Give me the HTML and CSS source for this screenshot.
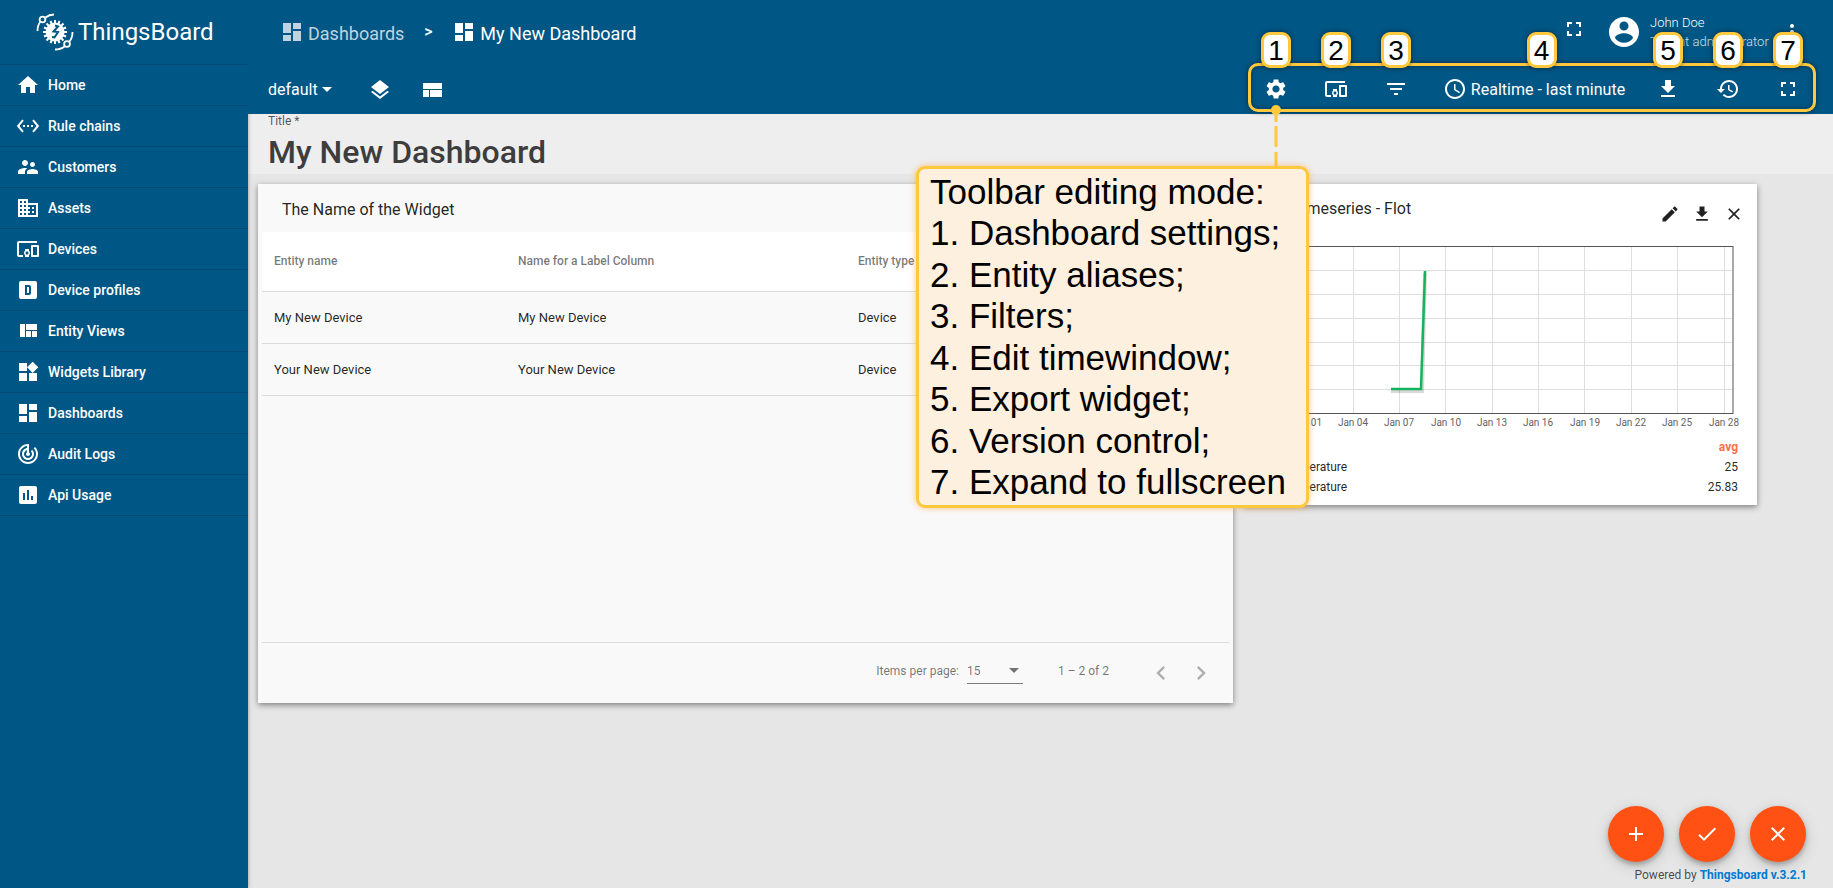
FILE: index.html
```html
<!DOCTYPE html>
<html lang="en">
<head>
<meta charset="utf-8">
<title>ThingsBoard | My New Dashboard</title>
<link rel="stylesheet" href="styles.css">
</head>
<body>
<svg class="sprite" aria-hidden="true">
  <symbol id="i-dashboard" viewBox="0 0 24 24"><path d="M3 13h8V3H3v10zm0 8h8v-6H3v6zm10 0h8V11h-8v10zm0-18v6h8V3h-8z"/></symbol>
  <symbol id="i-devices" viewBox="0 0 24 24"><path d="M3 6h18V4H3c-1.100 0-2 .9-2 2v12c0 1.100.9 2 2 2h4v-2H3V6zm10 6H9v1.780c-.61.55-1 1.330-1 2.220s.39 1.670 1 2.220V20h4v-1.780c.61-.55 1-1.340 1-2.220s-.39-1.670-1-2.220V12zm-2 5.500c-.83 0-1.500-.67-1.500-1.500s.67-1.500 1.500-1.500 1.500.67 1.500 1.500-.67 1.500-1.500 1.500zM22 8h-6c-.5 0-1 .5-1 1v10c0 .5.5 1 1 1h6c.5 0 1-.5 1-1V9c0-.5-.5-1-1-1zm-1 10h-4v-8h4v8z"/></symbol>
  <symbol id="i-fullscreen" viewBox="0 0 24 24"><path d="M7 14H5v5h5v-2H7v-3zm-2-4h2V7h3V5H5v5zm12 7h-3v2h5v-5h-2v3zM14 5v2h3v3h2V5h-5z"/></symbol>
  <symbol id="i-download" viewBox="0 0 24 24"><path d="M19 9h-4V3H9v6H5l7 7 7-7zM5 18v2h14v-2H5z"/></symbol>
  <symbol id="i-close" viewBox="0 0 24 24"><path d="M19 6.410L17.590 5 12 10.590 6.410 5 5 6.410 10.590 12 5 17.590 6.410 19 12 13.410 17.590 19 19 17.590 13.410 12z"/></symbol>
</svg>

<div class="app">
  <aside class="sidebar">
    <div class="brand">
      <svg class="brand-mark" viewBox="0 0 38 38" aria-hidden="true">
        <g fill="none" stroke="#fff" stroke-width="1.800">
          <path d="M1.500 18C1.500 14 2.500 11 4.500 8.500M9.500 4.500C12 2.500 15 1.500 18 1.500"/>
          <circle cx="6.500" cy="6.500" r="2.900"/>
          <path d="M36.500 19C36.500 23 35.500 26 33.500 28.500M28.500 33.500C26 35.500 22.500 36.500 19 36.500"/>
          <circle cx="31" cy="31" r="2.900"/>
          <g stroke-width="2">
            <path d="M19 7v24M7 19h24M10.500 10.500l17 17M10.500 27.500l17-17M14.500 8l9 22M8 23.500l22-9M23.500 8l-9 22M8 14.500l22 9"/>
          </g>
        </g>
        <circle cx="19" cy="19" r="9.500" fill="#fff"/>
        <path d="M19 12.500l3 1-4.500 5 4.500.5-3.500 5.500-2.500-.5" fill="none" stroke="#005684" stroke-width="2"/>
      </svg>
      <span class="brand-name">ThingsBoard</span>
    </div>
    <nav class="menu">
      <a href="#"><svg class="icon" viewBox="0 0 24 24"><path d="M10 20v-6h4v6h5v-8h3L12 3 2 12h3v8z"/></svg>Home</a>
      <a href="#"><svg class="icon" viewBox="0 0 24 24"><path d="M7.770 6.760L6.230 5.480.82 12l5.410 6.520 1.540-1.280L3.420 12l4.350-5.240zM7 13h2v-2H7v2zm10-2h-2v2h2v-2zm-6 2h2v-2h-2v2zm6.770-7.520l-1.540 1.280L20.580 12l-4.350 5.240 1.540 1.280L23.180 12l-5.410-6.520z"/></svg>Rule chains</a>
      <a href="#"><svg class="icon" viewBox="0 0 24 24"><path d="M16.500 12c1.380 0 2.490-1.120 2.490-2.500S17.880 7 16.500 7C15.120 7 14 8.120 14 9.500s1.120 2.500 2.500 2.500zM9 11c1.660 0 2.990-1.340 2.990-3S10.660 5 9 5C7.340 5 6 6.340 6 8s1.340 3 3 3zm7.500 3c-1.830 0-5.500.92-5.500 2.750V19h11v-2.250c0-1.830-3.670-2.750-5.500-2.750zM9 13c-2.330 0-7 1.170-7 3.500V19h7v-2.250c0-.85.33-2.340 2.370-3.470C10.500 13.100 9.660 13 9 13z"/></svg>Customers</a>
      <a href="#"><svg class="icon" viewBox="0 0 24 24"><path d="M12 7V3H2v18h20V7H12zM6 19H4v-2h2v2zm0-4H4v-2h2v2zm0-4H4V9h2v2zm0-4H4V5h2v2zm4 12H8v-2h2v2zm0-4H8v-2h2v2zm0-4H8V9h2v2zm0-4H8V5h2v2zm10 12h-8v-2h2v-2h-2v-2h2v-2h-2V9h8v10zm-2-8h-2v2h2v-2zm0 4h-2v2h2v-2z"/></svg>Assets</a>
      <a href="#"><svg class="icon"><use href="#i-devices"/></svg>Devices</a>
      <a href="#"><svg class="icon" viewBox="0 0 24 24"><path d="M9 7v10h4a2 2 0 0 0 2-2V9a2 2 0 0 0-2-2H9m2 2h2v6h-2V9M5 3h14a2 2 0 0 1 2 2v14a2 2 0 0 1-2 2H5a2 2 0 0 1-2-2V5a2 2 0 0 1 2-2z" fill-rule="evenodd"/></svg>Device profiles</a>
      <a href="#"><svg class="icon" viewBox="0 0 24 24"><path d="M10 18h5v-6h-5v6zm-6 0h5V5H4v13zm12 0h5v-6h-5v6zM10 5v6h11V5H10z"/></svg>Entity Views</a>
      <a href="#"><svg class="icon" viewBox="0 0 24 24"><path d="M13 13v8h8v-8h-8zM3 21h8v-8H3v8zM3 3v8h8V3H3zm13.660-1.310L11 7.340 16.660 13l5.660-5.660-5.660-5.650z"/></svg>Widgets Library</a>
      <a href="#"><svg class="icon"><use href="#i-dashboard"/></svg>Dashboards</a>
      <a href="#"><svg class="icon" viewBox="0 0 24 24"><path d="M19.070 4.930l-1.410 1.410C19.100 7.790 20 9.790 20 12c0 4.420-3.580 8-8 8s-8-3.580-8-8c0-4.080 3.050-7.440 7-7.930v2.020C8.160 6.570 6 9.030 6 12c0 3.310 2.690 6 6 6s6-2.690 6-6c0-1.660-.67-3.160-1.760-4.240l-1.410 1.410C15.550 9.900 16 10.900 16 12c0 2.210-1.790 4-4 4s-4-1.790-4-4c0-1.860 1.280-3.410 3-3.860v2.140c-.6.35-1 .98-1 1.720 0 1.100.9 2 2 2s2-.9 2-2c0-.74-.4-1.380-1-1.720V2h-1C6.480 2 2 6.480 2 12s4.480 10 10 10 10-4.480 10-10c0-2.760-1.120-5.260-2.930-7.070z"/></svg>Audit Logs</a>
      <a href="#"><svg class="icon" viewBox="0 0 24 24"><path d="M19 3H5c-1.100 0-2 .9-2 2v14c0 1.100.9 2 2 2h14c1.100 0 2-.9 2-2V5c0-1.100-.9-2-2-2zM9 17H7v-7h2v7zm4 0h-2V7h2v10zm4 0h-2v-4h2v4z"/></svg>Api Usage</a>
    </nav>
  </aside>

  <div class="main">
    <header class="header">
      <div class="topbar">
        <nav class="crumbs" aria-label="Breadcrumb">
          <a class="crumb crumb-parent" href="#"><svg class="icon"><use href="#i-dashboard"/></svg><span>Dashboards</span></a>
          <span class="crumb-sep">&gt;</span>
          <a class="crumb" href="#"><svg class="icon"><use href="#i-dashboard"/></svg><span>My New Dashboard</span></a>
        </nav>
        <div class="account">
          <button class="icon-btn account-full" aria-label="Fullscreen"><svg class="icon"><use href="#i-fullscreen"/></svg></button>
          <svg class="avatar" viewBox="0 0 24 24" aria-hidden="true"><path d="M12 2C6.480 2 2 6.480 2 12s4.480 10 10 10 10-4.480 10-10S17.520 2 12 2zm0 3c1.660 0 3 1.340 3 3s-1.340 3-3 3-3-1.340-3-3 1.340-3 3-3zm0 14.200c-2.500 0-4.710-1.280-6-3.220.03-1.990 4-3.080 6-3.080 1.990 0 5.970 1.090 6 3.080-1.290 1.940-3.500 3.220-6 3.220z"/></svg>
          <div class="who"><span>John Doe</span><span class="role">Tenant administrator</span></div>
          <button class="icon-btn" aria-label="User menu"><svg class="icon" viewBox="0 0 24 24"><path d="M12 8c1.100 0 2-.9 2-2s-.9-2-2-2-2 .9-2 2 .9 2 2 2zm0 2c-1.100 0-2 .9-2 2s.9 2 2 2 2-.9 2-2-.9-2-2-2zm0 6c-1.100 0-2 .9-2 2s.9 2 2 2 2-.9 2-2-.9-2-2-2z"/></svg></button>
        </div>
      </div>

      <div class="toolbar">
        <div class="states">
          <button class="state-btn">default<svg class="caret" viewBox="0 0 10 5" aria-hidden="true"><path d="M0 0h10L5 5z"/></svg></button>
          <button class="icon-btn" aria-label="Manage states"><svg class="icon" viewBox="0 0 24 24"><path d="M11.990 18.540l-7.370-5.730L3 14.070l9 7 9-7-1.630-1.270-7.380 5.740zM12 16l7.360-5.730L21 9l-9-7-9 7 1.630 1.270L12 16z"/></svg></button>
          <button class="icon-btn" aria-label="Manage layouts"><svg class="icon" viewBox="0 0 24 24"><path d="M3 19h6v-7H3v7zm7 0h12v-7H10v7zM3 5v6h19V5H3z"/></svg></button>
        </div>
        <div class="tools">
          <button class="icon-btn" aria-label="Dashboard settings"><svg class="icon" viewBox="0 0 24 24"><path d="M19.140 12.940c.04-.3.06-.61.06-.94 0-.32-.02-.64-.07-.94l2.030-1.580c.18-.14.23-.41.12-.61l-1.920-3.320c-.12-.22-.37-.29-.59-.22l-2.390.96c-.5-.38-1.030-.7-1.620-.94l-.36-2.540c-.04-.24-.24-.41-.48-.41h-3.840c-.24 0-.43.17-.47.41l-.36 2.540c-.59.24-1.130.57-1.620.94l-2.390-.96c-.22-.08-.47 0-.59.22L2.740 8.870c-.12.21-.08.47.12.61l2.030 1.580c-.05.3-.09.63-.09.94s.02.64.07.94l-2.030 1.580c-.18.14-.23.41-.12.61l1.920 3.320c.12.22.37.29.59.22l2.390-.96c.5.38 1.030.7 1.620.94l.36 2.540c.05.24.24.41.48.41h3.840c.24 0 .44-.17.47-.41l.36-2.540c.59-.24 1.130-.56 1.620-.94l2.390.96c.22.08.47 0 .59-.22l1.920-3.320c.12-.22.07-.47-.12-.61l-2.010-1.580zM12 15.600c-1.980 0-3.600-1.620-3.600-3.600s1.620-3.600 3.600-3.600 3.600 1.620 3.600 3.600-1.620 3.600-3.600 3.600z"/></svg><span class="badge">1</span></button>
          <button class="icon-btn" aria-label="Entity aliases"><svg class="icon"><use href="#i-devices"/></svg><span class="badge">2</span></button>
          <button class="icon-btn" aria-label="Filters"><svg class="icon" viewBox="0 0 24 24"><path d="M10 18h4v-2h-4v2zM3 6v2h18V6H3zm3 7h12v-2H6v2z"/></svg><span class="badge">3</span></button>
          <button class="time-btn"><svg class="icon" viewBox="0 0 24 24" aria-hidden="true"><path d="M11.990 2C6.470 2 2 6.480 2 12s4.470 10 9.990 10C17.520 22 22 17.520 22 12S17.520 2 11.990 2zM12 20c-4.420 0-8-3.580-8-8s3.580-8 8-8 8 3.580 8 8-3.580 8-8 8zm.5-13H11v6l5.250 3.150.75-1.230-4.500-2.670z"/></svg>Realtime - last minute<span class="badge">4</span></button>
          <button class="icon-btn" aria-label="Export widget"><svg class="icon"><use href="#i-download"/></svg><span class="badge">5</span></button>
          <button class="icon-btn" aria-label="Version control"><svg class="icon" viewBox="0 0 24 24"><path d="M13 3c-4.970 0-9 4.030-9 9H1l3.890 3.890.07.14L9 12H6c0-3.870 3.130-7 7-7s7 3.130 7 7-3.130 7-7 7c-1.930 0-3.680-.79-4.940-2.060l-1.420 1.420C8.270 19.990 10.510 21 13 21c4.970 0 9-4.030 9-9s-4.030-9-9-9zm-1 5v5l4.280 2.540.72-1.210-3.500-2.080V8H12z"/></svg><span class="badge">6</span></button>
          <button class="icon-btn" aria-label="Expand to fullscreen"><svg class="icon"><use href="#i-fullscreen"/></svg><span class="badge">7</span></button>

          <svg class="connector" viewBox="0 0 12 62" aria-hidden="true"><circle cx="6" cy="6" r="5"/><path d="M4.500 8h3v10h-3zM4.500 22h3v21h-3zM4.500 48h3v14h-3z"/></svg>
          <div class="callout">
            <span>Toolbar editing mode:</span>
            <span>1. Dashboard settings;</span>
            <span>2. Entity aliases;</span>
            <span>3. Filters;</span>
            <span>4. Edit timewindow;</span>
            <span>5. Export widget;</span>
            <span>6. Version control;</span>
            <span>7. Expand to fullscreen</span>
          </div>
        </div>
      </div>
    </header>

    <section class="title-strip">
      <label for="dash-title">Title *</label>
      <input id="dash-title" type="text" value="My New Dashboard">
    </section>

    <main class="board">
      <section class="widget widget-table">
        <h2 class="widget-title">The Name of the Widget</h2>
        <table class="entities">
          <thead><tr><th class="col-name">Entity name</th><th class="col-label">Name for a Label Column</th><th>Entity type</th></tr></thead>
          <tbody>
            <tr><td>My New Device</td><td>My New Device</td><td>Device</td></tr>
            <tr><td>Your New Device</td><td>Your New Device</td><td>Device</td></tr>
          </tbody>
        </table>
        <div class="pager">
          <label for="page-size">Items per page:</label>
          <span class="select-wrap">
            <select id="page-size"><option>15</option><option>30</option></select>
            <svg class="caret" viewBox="0 0 10 5" aria-hidden="true"><path d="M0 0h10L5 5z"/></svg>
          </span>
          <span class="range">1 – 2 of 2</span>
          <button class="icon-btn" aria-label="Previous page"><svg viewBox="0 0 24 24"><path d="M15.410 7.410L14 6l-6 6 6 6 1.410-1.410L10.830 12z"/></svg></button>
          <button class="icon-btn" aria-label="Next page"><svg viewBox="0 0 24 24"><path d="M10 6L8.590 7.410 13.170 12l-4.580 4.590L10 18l6-6z"/></svg></button>
        </div>
      </section>

      <section class="widget widget-chart">
        <div class="chart-head">
          <h2>Timeseries - Flot</h2>
          <div class="chart-actions">
            <button aria-label="Edit"><svg viewBox="0 0 24 24"><path d="M3 17.250V21h3.750L17.810 9.940l-3.750-3.750L3 17.250zM20.710 7.040c.39-.39.39-1.020 0-1.410l-2.340-2.340c-.39-.39-1.020-.39-1.410 0l-1.830 1.830 3.750 3.750 1.830-1.830z"/></svg></button>
            <button aria-label="Export"><svg><use href="#i-download"/></svg></button>
            <button aria-label="Remove"><svg><use href="#i-close"/></svg></button>
          </div>
        </div>
        <svg class="plot" viewBox="0 0 514 192" role="img" aria-label="Temperature over January">
          <path class="grid" d="M64.500 6v167M110.500 6v167M156.500 6v167M202.500 6v167M249.500 6v167M295.500 6v167M341.500 6v167M388.500 6v167M434.500 6v167M481.500 6v167M32 30.500h458M32 54.500h458M32 78.500h458M32 102.500h458M32 125.500h458M32 149.500h458"/>
          <rect class="frame" x="32" y="6.500" width="458" height="167"/>
          <path class="series-shadow" d="M148 151h31l3-118"/>
          <path class="series" d="M148 149h30l4-118"/>
          <g class="ticks">
            <text x="64" y="186">Jan 01</text><text x="110" y="186">Jan 04</text><text x="156" y="186">Jan 07</text><text x="203" y="186">Jan 10</text><text x="249" y="186">Jan 13</text><text x="295" y="186">Jan 16</text><text x="342" y="186">Jan 19</text><text x="388" y="186">Jan 22</text><text x="434" y="186">Jan 25</text><text x="481" y="186">Jan 28</text>
          </g>
        </svg>
        <table class="legend">
          <thead><tr><th></th><th>avg</th></tr></thead>
          <tbody>
            <tr><td>temperature</td><td>25</td></tr>
            <tr><td>temperature</td><td>25.83</td></tr>
          </tbody>
        </table>
      </section>
    </main>

    <footer class="footer">
      <div class="fabs">
        <button aria-label="Add widget"><svg viewBox="0 0 24 24"><path d="M19 13h-6v6h-2v-6H5v-2h6V5h2v6h6v2z"/></svg></button>
        <button aria-label="Apply changes"><svg viewBox="0 0 24 24"><path d="M9 16.170L4.830 12l-1.420 1.410L9 19 21 7l-1.410-1.410z"/></svg></button>
        <button aria-label="Decline changes"><svg><use href="#i-close"/></svg></button>
      </div>
      <p>Powered by <a href="#">Thingsboard v.3.2.1</a></p>
    </footer>
  </div>
</div>
</body>
</html>
```
FILE: styles.css
```css
* { box-sizing: border-box; }

:root {
  --blue: #005684;
  --amber: #ffc83d;
  --orange: #ff5114;
}

body {
  margin: 0;
  font-family: Roboto, "Liberation Sans", sans-serif;
  font-size: 14px;
  color: rgba(0, 0, 0, 0.87);
}

h2, p { margin: 0; font-weight: 400; }
a { color: inherit; text-decoration: none; }

button {
  display: flex;
  align-items: center;
  justify-content: center;
  padding: 0;
  border: 0;
  background: none;
  color: inherit;
  font: inherit;
  cursor: pointer;
}

svg { fill: currentColor; flex: none; }
.sprite { position: absolute; width: 0; height: 0; }
.icon { width: 24px; height: 24px; }
.icon-btn { position: relative; width: 40px; height: 40px; }
.caret { width: 10px; height: 5px; }

.app { display: flex; min-height: 100vh; }

/* Sidebar */
.sidebar {
  position: relative;
  z-index: 1;
  flex: none;
  width: 248px;
  background: var(--blue);
  color: #fff;
  box-shadow: 0 0 4px rgba(0, 0, 0, 0.35);
}

.brand {
  display: flex;
  align-items: center;
  gap: 4px;
  height: 64px;
  padding-left: 36px;
}
.brand-mark { width: 38px; height: 38px; }
.brand-name { font-size: 24px; line-height: 32px; }

.menu { border-top: 1px solid #004a72; }
.menu a {
  display: flex;
  align-items: center;
  gap: 8px;
  height: 41px;
  padding-left: 16px;
  border-bottom: 1px solid #004a72;
  font-weight: 500;
}

/* Header */
.main {
  display: flex;
  flex: 1;
  flex-direction: column;
  min-width: 0;
  background: #e6e6e6;
}

.header { position: relative; z-index: 2; background: var(--blue); color: #fff; }

.topbar {
  display: flex;
  align-items: center;
  justify-content: space-between;
  height: 63px;
  padding: 0 21px 0 32px;
}

.crumbs { display: flex; align-items: center; }
.crumb { display: flex; align-items: center; gap: 4px; font-size: 18px; line-height: 28px; }
.crumb span { padding-top: 4px; }
.crumb-parent { color: rgba(255, 255, 255, 0.75); }
.crumb-sep { width: 48px; text-align: center; font-size: 16px; font-weight: 500; }

.account { display: flex; align-items: center; font-weight: 300; }
.account-full { margin-bottom: 6px; }
.avatar { width: 36px; height: 36px; margin: 0 8px 0 12px; }
.who { display: flex; flex-direction: column; width: 122px; font-size: 13px; line-height: 19px; }
.role { opacity: 0.8; white-space: nowrap; }

.toolbar { display: flex; justify-content: space-between; height: 51px; padding: 0 17px 0 20px; }

.states { display: flex; align-items: center; gap: 12px; padding-top: 2px; font-size: 16px; }
.state-btn { gap: 4px; margin-right: 16px; }

.tools {
  position: relative;
  display: flex;
  align-items: center;
  gap: 20px;
  height: 49px;
  padding: 3px 5px 0;
  border: 3px solid var(--amber);
  border-radius: 10px;
  box-shadow: 0 0 5px rgba(0, 0, 0, 0.5), inset 0 0 5px rgba(0, 0, 0, 0.4);
}
.time-btn { position: relative; gap: 4px; width: 192px; height: 40px; padding-left: 4px; font-size: 16px; white-space: nowrap; }

/* Annotations over the toolbar */
.badge {
  position: absolute;
  bottom: 41px;
  left: 50%;
  width: 30px;
  height: 36px;
  margin-left: -15px;
  border: 3px solid var(--amber);
  border-radius: 9px;
  background: #fff;
  color: #000;
  font: 28px/31px "Liberation Sans", Arial, sans-serif;
  text-align: center;
  box-shadow: 0 0 5px rgba(0, 0, 0, 0.5);
}
.time-btn .badge { left: 55%; }

.connector {
  position: absolute;
  top: 38px;
  left: 19px;
  width: 12px;
  height: 62px;
  fill: var(--amber);
}

.callout {
  position: absolute;
  top: 100px;
  left: -335px;
  display: flex;
  flex-direction: column;
  justify-content: space-between;
  width: 393px;
  height: 342px;
  padding: 4px 11px;
  border: 3px solid var(--amber);
  border-radius: 9px;
  background: #fdf0de;
  color: #000;
  font: 35px/38px "Liberation Sans", Arial, sans-serif;
  white-space: nowrap;
  box-shadow: 0 0 6px rgba(255, 160, 60, 0.6);
}

/* Title */
.title-strip { height: 60px; padding: 0 20px; background: #eee; }
.title-strip label { display: block; font-size: 12px; line-height: 14px; color: rgba(0, 0, 0, 0.66); }
.title-strip input {
  width: 100%;
  height: 46px;
  padding: 2px 0 0;
  border: 0;
  outline: 0;
  background: none;
  color: #3d3d3d;
  font: 500 32px/40px Roboto, sans-serif;
}

/* Widgets */
.board {
  display: grid;
  grid-template-columns: 975fr 514fr;
  align-items: start;
  gap: 10px;
  padding: 10px 76px 10px 10px;
}
.widget {
  display: flex;
  flex-direction: column;
  background: #fff;
  box-shadow: 0 2px 6px rgba(0, 0, 0, 0.45);
}

.widget-table { min-height: 519px; padding: 0 4px; background: #f9f9f9; }
.widget-title { padding: 4px 20px 0; font-size: 16px; line-height: 44px; }

.entities { width: 100%; border-collapse: collapse; table-layout: fixed; text-align: left; font-size: 13px; }
.entities th, .entities td { height: 52px; padding: 0 12px; border-bottom: 1px solid #dcdcdc; }
.entities th { height: 59px; background: #fff; font-size: 12px; font-weight: 500; color: rgba(0, 0, 0, 0.54); }
.col-name { width: 244px; }
.col-label { width: 340px; }

.pager {
  display: flex;
  align-items: center;
  height: 61px;
  margin-top: auto;
  padding: 0 8px 4px;
  border-top: 1px solid #dcdcdc;
  justify-content: flex-end;
  font-size: 12px;
  color: rgba(0, 0, 0, 0.54);
}
.select-wrap { display: flex; align-items: center; margin-left: 8px; padding-right: 4px; border-bottom: 1px solid rgba(0, 0, 0, 0.5); }
.pager select {
  width: 42px;
  height: 24px;
  padding: 0;
  border: 0;
  appearance: none;
  background: none;
  color: inherit;
  font: inherit;
}
.range { margin: 0 32px 0 35px; }
.pager .icon-btn { padding-top: 4px; opacity: 0.55; }
.pager .icon-btn svg { width: 28px; height: 28px; }

.chart-head { display: flex; justify-content: space-between; height: 56px; padding: 0 13px 0 50px; }
.chart-head h2 { font-size: 16px; line-height: 50px; }
.chart-actions { display: flex; align-items: center; gap: 12px; padding-top: 4px; }
.chart-actions svg { width: 20px; height: 20px; }

.plot { width: 100%; height: auto; }
.grid { fill: none; stroke: #dedede; stroke-width: 1; }
.frame { fill: none; stroke: #545454; stroke-width: 1; }
.series { fill: none; stroke: #15b45c; stroke-width: 2.500; }
.series-shadow { fill: none; stroke: rgba(0, 0, 0, 0.15); stroke-width: 4; }
.ticks { font-size: 10px; text-anchor: middle; fill: #636363; }

.legend { margin: 5px 19px 8px; border-collapse: collapse; font-size: 12px; line-height: 20px; }
.legend th, .legend td { padding: 0; text-align: left; }
.legend th { color: #ff6f4c; }
.legend td:first-child { padding-left: 20px; }
.legend th:last-child, .legend td:last-child { text-align: right; }

/* Footer */
.footer { display: flex; flex-direction: column; align-items: flex-end; margin-top: auto; padding: 0 26px 4px; }
.fabs { display: flex; gap: 15px; padding-right: 1px; }
.fabs button {
  width: 56px;
  height: 56px;
  border-radius: 50%;
  background: var(--orange);
  color: #fff;
  box-shadow: 0 3px 5px rgba(0, 0, 0, 0.25), 0 4px 16px rgba(0, 0, 0, 0.14);
}
.fabs svg { width: 24px; height: 24px; }
.footer p { padding-top: 4px; font-size: 12px; line-height: 18px; color: rgba(0, 0, 0, 0.7); }
.footer a { color: #0079d0; font-weight: 700; }
```
